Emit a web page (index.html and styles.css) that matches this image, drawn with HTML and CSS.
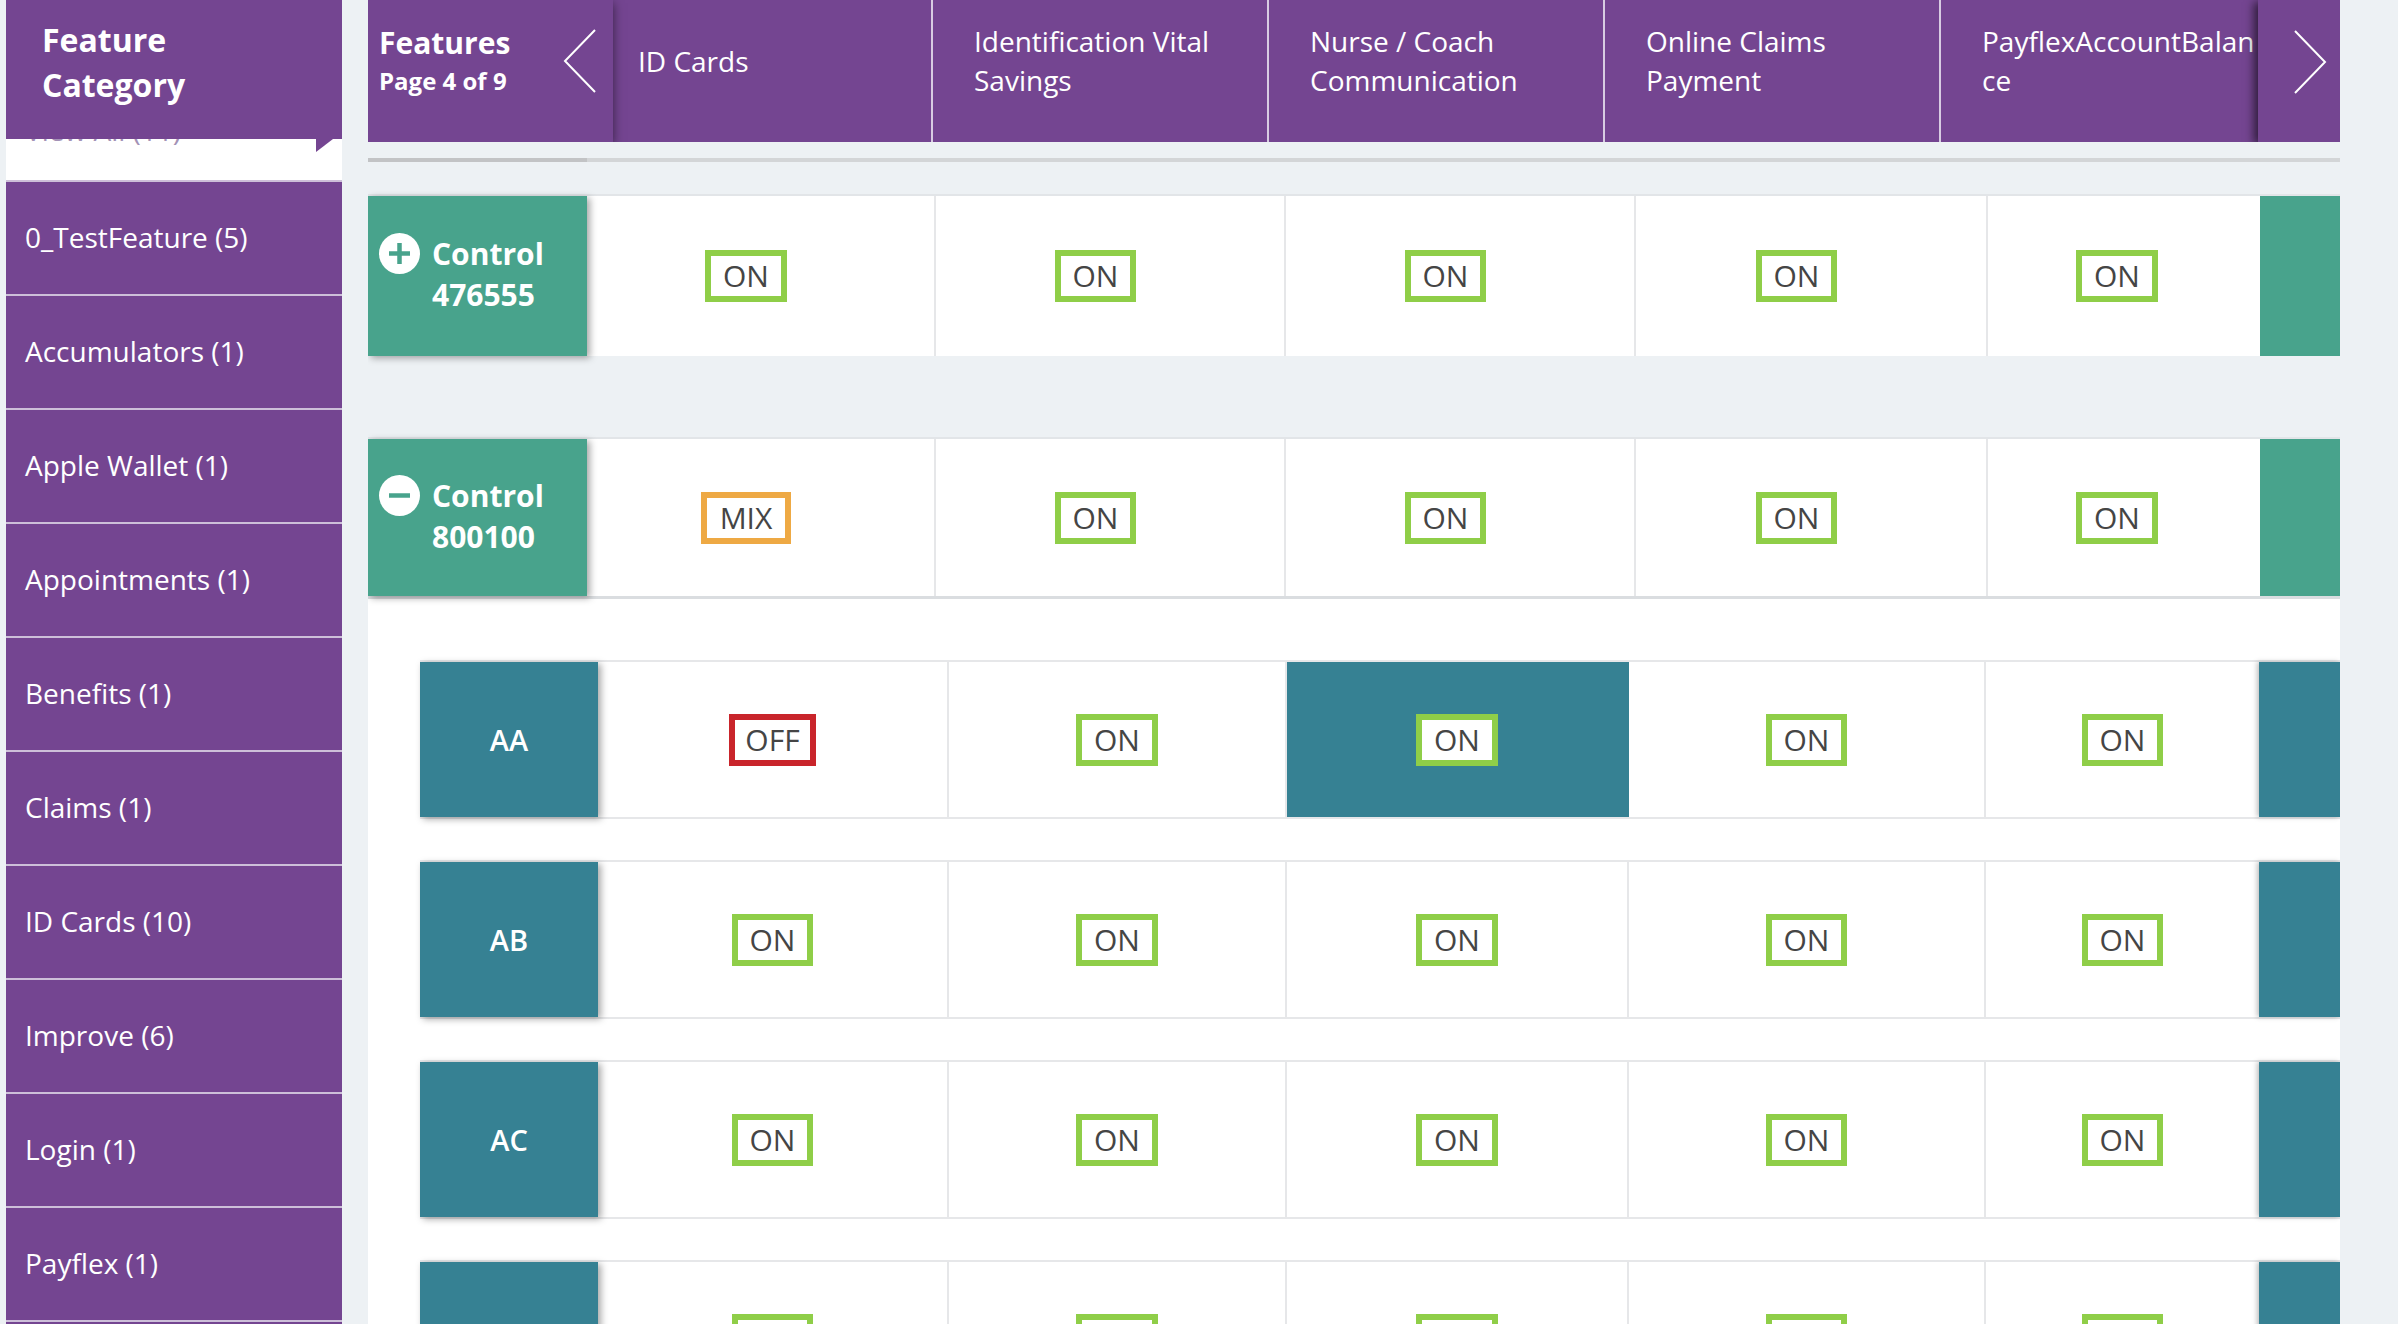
FILE: index.html
```html
<!DOCTYPE html>
<html lang="en">
<head>
<meta charset="utf-8">
<title>Feature Matrix</title>
<link rel="stylesheet" href="styles.css">
</head>
<body>
<div class="page">
  <aside class="sidebar">
    <div class="side-head"><h2>Feature Category</h2></div>
    <ul class="side-list">
      <li class="side-item active">View All (11)</li>
      <li class="side-item">0_TestFeature (5)</li>
      <li class="side-item">Accumulators (1)</li>
      <li class="side-item">Apple Wallet (1)</li>
      <li class="side-item">Appointments (1)</li>
      <li class="side-item">Benefits (1)</li>
      <li class="side-item">Claims (1)</li>
      <li class="side-item">ID Cards (10)</li>
      <li class="side-item">Improve (6)</li>
      <li class="side-item">Login (1)</li>
      <li class="side-item">Payflex (1)</li>
      <li class="side-item">Rewards (1)</li>
    </ul>
  </aside>

  <main class="main">
    <div class="head-row">
      <div class="feat-head">
        <div class="feat-title">
          <div class="feat-name">Features</div>
          <div class="feat-page">Page 4 of 9</div>
        </div>
        <svg class="chev" width="34" height="64" viewBox="0 0 34 64"><polyline points="32,1 2,32 32,63" fill="none" stroke="#fff" stroke-width="2"/></svg>
      </div>
      <div class="col-head first">ID Cards</div>
      <div class="col-head">Identification Vital Savings</div>
      <div class="col-head">Nurse / Coach Communication</div>
      <div class="col-head">Online Claims Payment</div>
      <div class="col-head">PayflexAccountBalance</div>
      <div class="nav-next">
        <svg width="34" height="64" viewBox="0 0 34 64"><polyline points="2,1 32,32 2,63" fill="none" stroke="#fff" stroke-width="2"/></svg>
      </div>
    </div>

    <div class="track"><div class="thumb"></div></div>

    <div class="ctrl-row r1">
      <div class="ctrl-label">
        <div class="ctrl-inner">
          <svg class="toggle" width="41" height="41" viewBox="0 0 41 41"><circle cx="20.5" cy="20.5" r="20.5" fill="#fff"/><path d="M10 20.5h21M20.5 10v21" stroke="#48a38c" stroke-width="4.5"/></svg>
          <span class="ctrl-text">Control<br>476555</span>
        </div>
      </div>
      <div class="cell"><span class="badge on">ON</span></div>
      <div class="cell"><span class="badge on">ON</span></div>
      <div class="cell"><span class="badge on">ON</span></div>
      <div class="cell"><span class="badge on">ON</span></div>
      <div class="cell last"><span class="badge on">ON</span></div>
      <div class="row-end"></div>
    </div>

    <div class="ctrl-row r2">
      <div class="ctrl-label">
        <div class="ctrl-inner">
          <svg class="toggle" width="41" height="41" viewBox="0 0 41 41"><circle cx="20.5" cy="20.5" r="20.5" fill="#fff"/><path d="M10 20.5h21" stroke="#48a38c" stroke-width="4.5"/></svg>
          <span class="ctrl-text">Control<br>800100</span>
        </div>
      </div>
      <div class="cell"><span class="badge mix">MIX</span></div>
      <div class="cell"><span class="badge on">ON</span></div>
      <div class="cell"><span class="badge on">ON</span></div>
      <div class="cell"><span class="badge on">ON</span></div>
      <div class="cell last"><span class="badge on">ON</span></div>
      <div class="row-end"></div>
    </div>

    <div class="panel">
      <div class="child-row">
        <div class="child-label">AA</div>
        <div class="ccell"><span class="badge off">OFF</span></div>
        <div class="ccell"><span class="badge on">ON</span></div>
        <div class="ccell hl"><span class="badge on">ON</span></div>
        <div class="ccell"><span class="badge on">ON</span></div>
        <div class="ccell last"><span class="badge on">ON</span></div>
        <div class="child-end"></div>
      </div>
      <div class="child-row">
        <div class="child-label">AB</div>
        <div class="ccell"><span class="badge on">ON</span></div>
        <div class="ccell"><span class="badge on">ON</span></div>
        <div class="ccell"><span class="badge on">ON</span></div>
        <div class="ccell"><span class="badge on">ON</span></div>
        <div class="ccell last"><span class="badge on">ON</span></div>
        <div class="child-end"></div>
      </div>
      <div class="child-row">
        <div class="child-label">AC</div>
        <div class="ccell"><span class="badge on">ON</span></div>
        <div class="ccell"><span class="badge on">ON</span></div>
        <div class="ccell"><span class="badge on">ON</span></div>
        <div class="ccell"><span class="badge on">ON</span></div>
        <div class="ccell last"><span class="badge on">ON</span></div>
        <div class="child-end"></div>
      </div>
      <div class="child-row">
        <div class="child-label">AD</div>
        <div class="ccell"><span class="badge on">ON</span></div>
        <div class="ccell"><span class="badge on">ON</span></div>
        <div class="ccell"><span class="badge on">ON</span></div>
        <div class="ccell"><span class="badge on">ON</span></div>
        <div class="ccell last"><span class="badge on">ON</span></div>
        <div class="child-end"></div>
      </div>
    </div>
  </main>
</div>
</body>
</html>
```

FILE: styles.css
```css
* { box-sizing: border-box; }

html, body {
  margin: 0;
  padding: 0;
  height: 1324px;
  overflow: hidden;
  background: #edf1f4;
  font-family: "Open Sans", "Noto Sans", "Liberation Sans", sans-serif;
}

.page {
  display: flex;
  height: 1324px;
  padding-left: 6px;
  gap: 26px;
}

/* ---------- sidebar ---------- */
.sidebar {
  flex: 0 0 336px;
  height: 1324px;
  display: flex;
  flex-direction: column;
  overflow: hidden;
}

.side-head {
  position: relative;
  z-index: 2;
  flex: 0 0 139px;
  background: #744591;
  padding: 17px 0 0 36px;
}

.side-head::after {
  content: "";
  position: absolute;
  top: 100%;
  right: 9px;
  width: 0;
  height: 0;
  border-top: 13px solid #744591;
  border-right: 17px solid transparent;
}

.side-head h2 {
  margin: 0;
  width: 200px;
  color: #fff;
  font-size: 32px;
  line-height: 45px;
  font-weight: 700;
}

.side-list {
  list-style: none;
  margin: 0;
  padding: 0;
  flex: 1;
  overflow: hidden;
}

.side-item {
  height: 114px;
  display: flex;
  align-items: center;
  padding: 0 0 2px 19px;
  background: #744591;
  border-bottom: 2px solid #cdbfd9;
  color: #fff;
  font-size: 28px;
  line-height: 38px;
}

.side-item.active {
  margin-top: -71px;
  padding-top: 14px;
  background: #fff;
  color: #a392b6;
}

/* ---------- main ---------- */
.main {
  flex: 0 0 1972px;
  height: 1324px;
  display: flex;
  flex-direction: column;
  overflow: hidden;
}

.main > * { flex-shrink: 0; }

.head-row {
  position: relative;
  display: flex;
  height: 142px;
  background: #744591;
  overflow: hidden;
}

.feat-head {
  position: relative;
  z-index: 2;
  flex: 0 0 245px;
  display: flex;
  align-items: center;
  padding: 0 16px 20px 11px;
  background: #744591;
  box-shadow: 0 3px 10px rgba(0, 0, 0, 0.55);
}

.feat-title { color: #fff; font-weight: 700; }
.feat-name { font-size: 30px; line-height: 40px; }
.feat-page { font-size: 24px; line-height: 36px; }

.chev { margin-left: auto; }

.col-head {
  flex: 0 0 336px;
  display: flex;
  align-items: center;
  padding: 0 20px 20px 41px;
  border-right: 2px solid #d8cce2;
  color: #fff;
  font-size: 28px;
  line-height: 39px;
  overflow-wrap: anywhere;
}

.col-head.first {
  flex-basis: 320px;
  padding-left: 25px;
}

.nav-next {
  position: absolute;
  top: 0;
  right: 0;
  z-index: 2;
  width: 82px;
  height: 142px;
  display: flex;
  align-items: center;
  justify-content: center;
  padding: 0 0 18px 22px;
  background: #744591;
  box-shadow: -4px 2px 9px rgba(0, 0, 0, 0.6);
}

.track {
  margin-top: 16px;
  height: 4px;
  width: 1975px;
  background: #d3d5d7;
}

.thumb {
  width: 219px;
  height: 4px;
  background: #c2c3c5;
}

/* ---------- control rows ---------- */
.ctrl-row {
  display: grid;
  grid-template-columns: 219px 349px 350px 350px 352px 1fr 80px;
  border-top: 2px solid #e2e5e8;
  background: #fff;
}

.ctrl-row.r1 { margin-top: 32px; height: 162px; }
.ctrl-row.r2 { margin-top: 81px; height: 162px; border-bottom: 3px solid #dadde0; }

.ctrl-label {
  position: relative;
  z-index: 1;
  display: flex;
  align-items: center;
  padding: 0 0 4px 11px;
  background: #48a38c;
  box-shadow: 3px 2px 7px rgba(0, 0, 0, 0.35);
}

.ctrl-inner {
  display: flex;
  align-items: flex-start;
  gap: 12px;
}

.toggle { flex: 0 0 41px; }

.ctrl-text {
  color: #fff;
  font-size: 30px;
  line-height: 41px;
  font-weight: 700;
}

.cell {
  display: flex;
  align-items: center;
  justify-content: center;
  padding-right: 29px;
  border-right: 2px solid #e6e7e9;
}

.cell.last {
  border-right: 0;
  padding-right: 14px;
}

.row-end { background: #48a38c; }

/* ---------- badges ---------- */
.badge {
  display: inline-block;
  border: 6px solid #8fce48;
  background: #fff;
  padding: 0 12px;
  color: #454545;
  font-size: 30px;
  line-height: 40px;
  white-space: nowrap;
}

.badge.mix { border-color: #eea944; padding: 0 13px; }
.badge.off { border-color: #c9252b; padding: 0 10px; }

/* ---------- child panel ---------- */
.panel {
  flex: 1 0 auto;
  background: #fff;
  padding-top: 61px;
  display: flex;
  flex-direction: column;
  gap: 41px;
}

.child-row {
  margin-left: 52px;
  display: grid;
  grid-template-columns: 178px 351px 338px 342px 357px 1fr 81px;
  height: 159px;
  flex: 0 0 159px;
  border-top: 2px solid #e6e7e9;
  border-bottom: 2px solid #e6e7e9;
}

.child-label {
  position: relative;
  z-index: 1;
  display: flex;
  align-items: center;
  justify-content: center;
  background: #368193;
  color: #fff;
  font-size: 29px;
  font-weight: 600;
  box-shadow: 3px 2px 7px rgba(0, 0, 0, 0.35);
}

.ccell {
  display: flex;
  align-items: center;
  justify-content: center;
  border-right: 2px solid #e6e7e9;
}

.ccell.last { border-right: 0; }
.ccell.hl { background: #368193; border-right-color: #368193; }

.child-end {
  background: #368193;
  box-shadow: -2px 0 5px rgba(0, 0, 0, 0.25);
}
```
